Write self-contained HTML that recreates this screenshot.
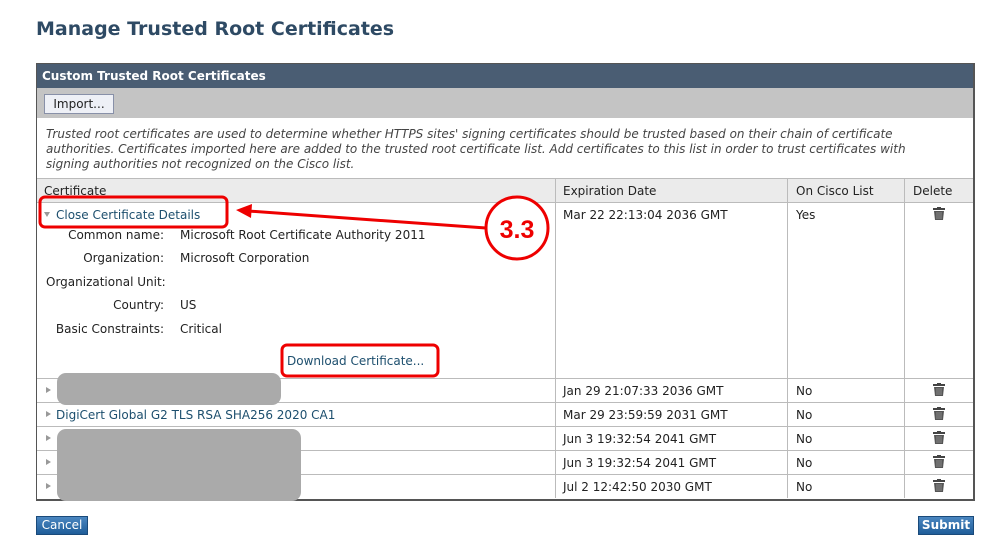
<!DOCTYPE html>
<html><head><meta charset="utf-8"><style>
body{margin:0;width:999px;height:557px;background:#fff;font-family:"DejaVu Sans","Liberation Sans",sans-serif;position:relative;overflow:hidden}
.a{position:absolute}
.t{font-size:12px;color:#222;white-space:nowrap}
.lnk{color:#1d4f6e}
.hl{position:absolute;height:1px;background:#bbb}
.vl{position:absolute;width:1px;background:#bbb}
.tri{position:absolute;width:0;height:0;border-top:3px solid transparent;border-bottom:3px solid transparent;border-left:5px solid #999}
.gb{position:absolute;background:#aaa;border-radius:9px}
.btn{position:absolute;background:linear-gradient(#4a86c0,#1f5d99);color:#fff;font-size:12px;border:1px solid #1a4a7a;text-align:center;line-height:17px}
.lab{text-align:right;width:128px}
</style></head><body>
<div class="a" style="left:36px;top:18px;font-size:19px;font-weight:bold;color:#2e4a64;font-family:'DejaVu Sans',sans-serif">Manage Trusted Root Certificates</div>
<div class="a" style="left:36px;top:63px;width:936px;height:435px;border:1px solid #555;border-width:1px 2px 2px 1px"></div>
<div class="a" style="left:37px;top:64px;width:936px;height:24px;background:#4a5d73;color:#fff;font-weight:bold;font-size:12px;line-height:24px;padding-left:5px;box-sizing:border-box">Custom Trusted Root Certificates</div>
<div class="a" style="left:37px;top:88px;width:936px;height:30px;background:#c4c4c4"></div>
<div class="a" style="left:44px;top:94px;width:68px;height:18px;background:#eef0f6;border:1px solid #8890a8;font-size:12px;line-height:18px;text-align:center;color:#222">Import...</div>
<div class="a t" style="left:46px;top:127px;font-style:italic;color:#444;line-height:15px">Trusted root certificates are used to determine whether HTTPS sites' signing certificates should be trusted based on their chain of certificate<br>authorities. Certificates imported here are added to the trusted root certificate list. Add certificates to this list in order to trust certificates with<br>signing authorities not recognized on the Cisco list.</div>
<div class="a" style="left:37px;top:179px;width:936px;height:23px;background:#ebebeb"></div>
<div class="hl" style="left:37px;top:178px;width:936px"></div>
<div class="hl" style="left:37px;top:202px;width:936px"></div>
<div class="hl" style="left:37px;top:378px;width:936px"></div>
<div class="hl" style="left:37px;top:402px;width:936px"></div>
<div class="hl" style="left:37px;top:426px;width:936px"></div>
<div class="hl" style="left:37px;top:450px;width:936px"></div>
<div class="hl" style="left:37px;top:474px;width:936px"></div>
<div class="vl" style="left:555px;top:179px;height:319px"></div>
<div class="vl" style="left:787px;top:179px;height:319px"></div>
<div class="vl" style="left:904px;top:179px;height:319px"></div>
<div class="a t" style="left:44px;top:184px">Certificate</div>
<div class="a t" style="left:563px;top:184px">Expiration Date</div>
<div class="a t" style="left:796px;top:184px">On Cisco List</div>
<div class="a t" style="left:913px;top:184px">Delete</div>
<div class="a" style="left:44px;top:212px;width:0;height:0;border-left:3px solid transparent;border-right:3px solid transparent;border-top:5px solid #999"></div>
<div class="a t lnk" style="left:56px;top:208px">Close Certificate Details</div>
<div class="a t lab" style="left:36px;top:228px">Common name:</div>
<div class="a t" style="left:180px;top:228px">Microsoft Root Certificate Authority 2011</div>
<div class="a t lab" style="left:36px;top:251px">Organization:</div>
<div class="a t" style="left:180px;top:251px">Microsoft Corporation</div>
<div class="a t" style="left:46px;top:275px">Organizational Unit:</div>
<div class="a t lab" style="left:36px;top:298px">Country:</div>
<div class="a t" style="left:180px;top:298px">US</div>
<div class="a t lab" style="left:36px;top:322px">Basic Constraints:</div>
<div class="a t" style="left:180px;top:322px">Critical</div>
<div class="a t lnk" style="left:287px;top:354px">Download Certificate...</div>
<div class="a t" style="left:563px;top:208px">Mar 22 22:13:04 2036 GMT</div>
<div class="a t" style="left:796px;top:208px">Yes</div>
<div class="tri" style="left:46px;top:387px"></div>
<div class="tri" style="left:46px;top:411px"></div>
<div class="tri" style="left:46px;top:435px"></div>
<div class="tri" style="left:46px;top:459px"></div>
<div class="tri" style="left:46px;top:483px"></div>
<div class="a t lnk" style="left:56px;top:408px">DigiCert Global G2 TLS RSA SHA256 2020 CA1</div>
<div class="gb" style="left:57px;top:373px;width:224px;height:32px"></div>
<div class="gb" style="left:57px;top:429px;width:244px;height:72px"></div>
<div class="a t" style="left:563px;top:384px">Jan 29 21:07:33 2036 GMT</div>
<div class="a t" style="left:563px;top:408px">Mar 29 23:59:59 2031 GMT</div>
<div class="a t" style="left:563px;top:432px">Jun 3 19:32:54 2041 GMT</div>
<div class="a t" style="left:563px;top:456px">Jun 3 19:32:54 2041 GMT</div>
<div class="a t" style="left:563px;top:480px">Jul 2 12:42:50 2030 GMT</div>
<div class="a t" style="left:796px;top:384px">No</div>
<div class="a t" style="left:796px;top:408px">No</div>
<div class="a t" style="left:796px;top:432px">No</div>
<div class="a t" style="left:796px;top:456px">No</div>
<div class="a t" style="left:796px;top:480px">No</div>
<svg class="a" style="left:0;top:0" width="999" height="557">
<defs><g id="tr"><rect x="0" y="1" width="12" height="2" fill="#444"/><rect x="4" y="0" width="4" height="2" fill="#444"/><path d="M1 4h10l-1 9H2z" fill="#555"/><path d="M4 5v7M6 5v7M8 5v7" stroke="#999" stroke-width="0.8"/></g></defs>
<use href="#tr" x="933" y="207"/><use href="#tr" x="933" y="383"/><use href="#tr" x="933" y="407"/><use href="#tr" x="933" y="431"/><use href="#tr" x="933" y="455"/><use href="#tr" x="933" y="479"/>
<rect x="40" y="197" width="187" height="30" rx="5" fill="none" stroke="#e00" stroke-width="3"/>
<rect x="282" y="345" width="156" height="31" rx="5" fill="none" stroke="#e00" stroke-width="3"/>
<line x1="486" y1="228" x2="248" y2="211" stroke="#e00" stroke-width="3"/>
<path d="M236 210 L252 204 L251 218 Z" fill="#e00"/>
<circle cx="517" cy="228" r="31" fill="#fff" stroke="#e00" stroke-width="3"/>
<text x="517" y="238" text-anchor="middle" font-family="Liberation Sans,sans-serif" font-weight="bold" font-size="25" fill="#e00">3.3</text>
</svg>
<div class="btn" style="left:36px;top:516px;width:50px">Cancel</div>
<div class="btn" style="left:918px;top:516px;width:54px;font-weight:bold">Submit</div>
</body></html>
